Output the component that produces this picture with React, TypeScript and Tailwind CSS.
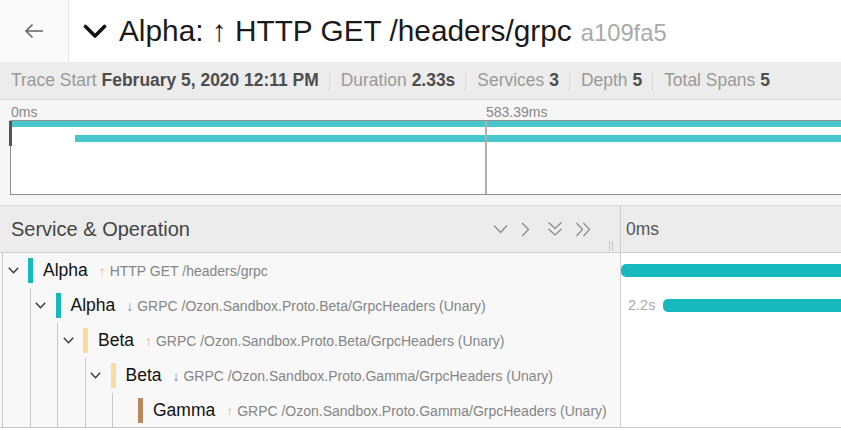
import React from "react";

type Span = {
  depth: number;
  service: string;
  color: string;
  dir: "up" | "down";
  op: string;
  hasChildren: boolean;
  bar?: { left: number; label?: string };
};

const spans: Span[] = [
  { depth: 0, service: "Alpha", color: "#17b8be", dir: "up", op: "HTTP GET /headers/grpc", hasChildren: true, bar: { left: 0 } },
  { depth: 1, service: "Alpha", color: "#17b8be", dir: "down", op: "GRPC /Ozon.Sandbox.Proto.Beta/GrpcHeaders (Unary)", hasChildren: true, bar: { left: 43, label: "2.2s" } },
  { depth: 2, service: "Beta", color: "#f8dca1", dir: "up", op: "GRPC /Ozon.Sandbox.Proto.Beta/GrpcHeaders (Unary)", hasChildren: true },
  { depth: 3, service: "Beta", color: "#f8dca1", dir: "down", op: "GRPC /Ozon.Sandbox.Proto.Gamma/GrpcHeaders (Unary)", hasChildren: true },
  { depth: 4, service: "Gamma", color: "#b7885e", dir: "up", op: "GRPC /Ozon.Sandbox.Proto.Gamma/GrpcHeaders (Unary)", hasChildren: false },
];

function RowChevron() {
  return (
    <svg width="11" height="7" viewBox="0 0 11 7" fill="none">
      <path d="M0.8 0.8 L5.5 5.8 L10.2 0.8" stroke="#333" strokeWidth="1.3" />
    </svg>
  );
}

function StatItem({ label, value, first }: { label: string; value: string; first?: boolean }) {
  return (
    <div className={first ? "flex items-center pr-[10px]" : "flex items-center pl-[11px] pr-[10px] border-l border-[#d9d9d9] h-[18px]"}>
      <span className="text-[#9a9a9a]">{label}</span>
      <span className="ml-[5px] font-bold text-[#4d4d4d]">{value}</span>
    </div>
  );
}

export default function App() {
  return (
    <div className="w-[841px] h-[430px] overflow-hidden bg-white font-['Liberation_Sans',Arial,sans-serif]">
      {/* Title header */}
      <div className="flex h-[62px]">
        <div className="w-[69px] shrink-0 bg-[#fafafa] border-r border-[#e3e3e3] flex items-center justify-center">
          <svg width="20" height="16" viewBox="0 0 20 16" fill="none">
            <path d="M19 8 H2 M8.5 1.5 L2 8 L8.5 14.5" stroke="#666" strokeWidth="1.6" />
          </svg>
        </div>
        <div className="flex items-center pl-[14px] whitespace-nowrap">
          <svg width="24" height="15" viewBox="0 0 24 15" fill="none">
            <path d="M2.5 2.5 L12 12 L21.5 2.5" stroke="#111" strokeWidth="3.6" strokeLinecap="round" strokeLinejoin="round" />
          </svg>
          <span className="ml-[12px] text-[29.8px] text-[#1a1a1a] leading-none">Alpha: ↑ HTTP GET /headers/grpc</span>
          <span className="ml-[9px] text-[23.8px] text-[#aaaaaa] leading-none mt-[3px]">a109fa5</span>
        </div>
      </div>

      {/* Stats bar */}
      <div className="h-[37px] bg-[#ececec] flex items-center pl-[11px] text-[17.45px] whitespace-nowrap">
        <StatItem first label="Trace Start" value="February 5, 2020 12:11 PM" />
        <StatItem label="Duration" value="2.33s" />
        <StatItem label="Services" value="3" />
        <StatItem label="Depth" value="5" />
        <StatItem label="Total Spans" value="5" />
      </div>

      {/* Minimap */}
      <div className="relative bg-[#f6f6f6] border-t border-b border-[#d8d8d8] h-[107px]">
        <div className="h-[20px] relative text-[14px] text-[#888]">
          <span className="absolute left-[11px] top-[2px]">0ms</span>
          <span className="absolute left-[486px] top-[2px]">583.39ms</span>
        </div>
        <div className="ml-[10px] w-[900px] h-[75px] bg-white border-t border-b border-l border-[#909090] relative">
          <div className="absolute left-[1px] top-0 right-0 h-[6px] bg-[#47c6cc]" />
          <div className="absolute left-[64px] top-[14px] right-0 h-[7px] bg-[#47c6cc]" />
          <div className="absolute left-[474px] top-0 bottom-0 w-[2px] bg-[#b0b0b0]" />
          <div className="absolute left-[-2px] top-0 w-[3px] h-[25px] bg-[#555]" />
        </div>
      </div>

      {/* Table header */}
      <div className="flex h-[47px] bg-[#ececec] border-b border-[#cfcfcf]">
        <div className="w-[620px] shrink-0 flex items-center pl-[11px] relative">
          <span className="text-[20px] text-[#444]">Service &amp; Operation</span>
          <div className="ml-auto flex items-center mr-[7px]">
            <svg width="15" height="10" viewBox="0 0 15 10" fill="none">
              <path d="M1 1.5 L7.5 8.5 L14 1.5" stroke="#888" strokeWidth="1.2" />
            </svg>
            <svg className="ml-[13px]" width="9" height="15" viewBox="0 0 9 15" fill="none">
              <path d="M1.2 1 L7.5 7.5 L1.2 14" stroke="#888" strokeWidth="1.2" />
            </svg>
            <svg className="ml-[17px]" width="16" height="16" viewBox="0 0 16 16" fill="none">
              <path d="M1.5 1.5 L8 7.5 L14.5 1.5 M1.5 8 L8 14 L14.5 8" stroke="#888" strokeWidth="1.2" />
            </svg>
            <svg className="ml-[12px]" width="16" height="15" viewBox="0 0 16 15" fill="none">
              <path d="M1.5 1 L7.5 7.5 L1.5 14 M8.5 1 L14.5 7.5 L8.5 14" stroke="#888" strokeWidth="1.2" />
            </svg>
            <div className="ml-[18px] self-end mt-[17px] flex gap-[2px] h-[10px] translate-y-[8px]">
              <div className="w-[1px] bg-[#c8c8c8]" />
              <div className="w-[1px] bg-[#c8c8c8]" />
            </div>
          </div>
        </div>
        <div className="flex-1 border-l border-[#cfcfcf] flex items-center pl-[5px]">
          <span className="text-[17.5px] text-[#555]">0ms</span>
        </div>
      </div>

      {/* Rows */}
      <div>
        {spans.map((s, i) => (
          <div key={i} className={"flex h-[35px]" + (i === spans.length - 1 ? " border-b border-[#c8c8c8]" : "")}>
            <div className="w-[620px] shrink-0 bg-[#f8f8f8] flex items-stretch pl-[2px] whitespace-nowrap overflow-hidden">
              {Array.from({ length: s.depth }).map((_, k) => (
                <div key={k} className="w-[27.5px] shrink-0 border-l border-[#c9c9c9]" />
              ))}
              <div className="flex items-center border-l border-[#c9c9c9]">
                <div className="w-[20px] flex items-center justify-center">
                  {s.hasChildren ? <RowChevron /> : null}
                </div>
                <div className="ml-[5px] w-[5px] h-[25px]" style={{ backgroundColor: s.color }} />
                <span className="ml-[10px] text-[17.5px] text-[#111]">{s.service}</span>
                <span className="ml-[11px] text-[14px] text-[#858585] mt-[2px]">
                  <span className={s.dir === "up" ? "text-[#f2b77a]" : "text-[#8a8a8a]"}>{s.dir === "up" ? "↑" : "↓"}</span>{" "}
                  {s.op}
                </span>
              </div>
            </div>
            <div className="flex-1 border-l border-[#cfcfcf] bg-white flex items-center relative">
              {s.bar ? (
                <div className="flex items-center w-full" style={{ paddingLeft: s.bar.left ? 7 : 0 }}>
                  {s.bar.label ? <span className="text-[14.5px] text-[#aaa] mr-[8px]">{s.bar.label}</span> : null}
                  <div className="flex-1 h-[13px] bg-[#17b8be] rounded-l-[5px]" />
                </div>
              ) : null}
            </div>
          </div>
        ))}
      </div>
    </div>
  );
}
